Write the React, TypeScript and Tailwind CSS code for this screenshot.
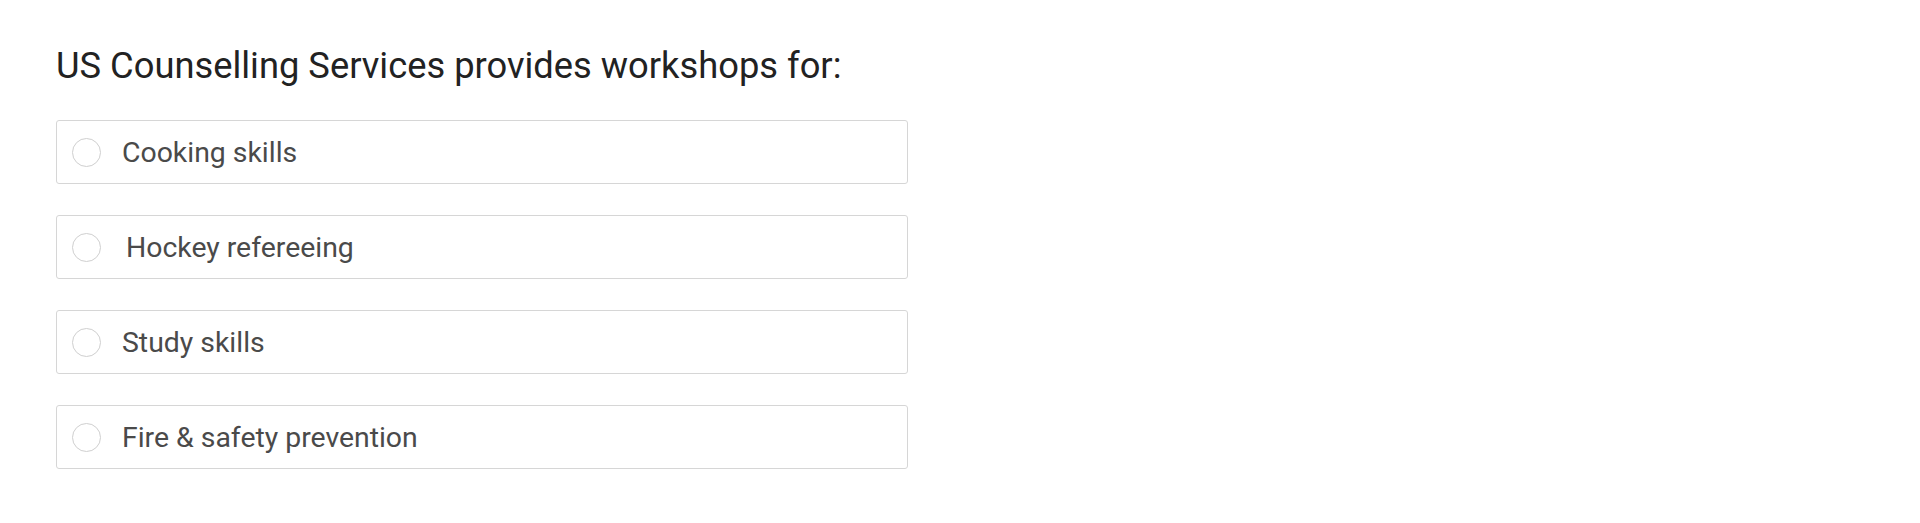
import React from "react";

const options = [
  { label: "Cooking skills", indent: false },
  { label: "Hockey refereeing", indent: true },
  { label: "Study skills", indent: false },
  { label: "Fire & safety prevention", indent: false },
];

const App = () => {
  return (
    <div className="min-h-screen bg-white pl-[56px] pt-[44px]" style={{ fontFamily: "Roboto, 'Noto Sans', sans-serif" }}>
      <h2 className="text-[36.3px] leading-[43px] font-normal text-[#222]">US Counselling Services provides workshops for:</h2>
      <div className="mt-[33px] flex w-[852px] flex-col gap-[31px]">
        {options.map((opt) => (
          <label
            key={opt.label}
            className="flex h-[64px] cursor-pointer items-center rounded-[3px] border border-[#d6d6d6] bg-white pl-[15px]"
          >
            <span className="h-[29px] w-[29px] shrink-0 rounded-full border border-[#cfcfcf] bg-white" />
            <span className={opt.indent ? "ml-[25px] pt-[3px] text-[28.4px] text-[#4a4a4a]" : "ml-[21px] pt-[3px] text-[28.4px] text-[#4a4a4a]"}>
              {opt.label}
            </span>
          </label>
        ))}
      </div>
    </div>
  );
};

export default App;
